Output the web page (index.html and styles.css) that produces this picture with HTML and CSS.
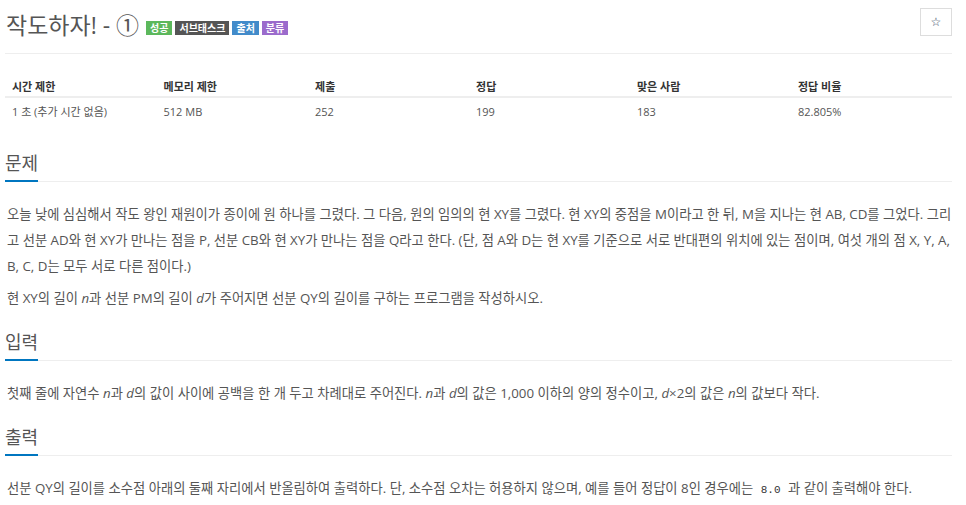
FILE: index.html
```html
<!DOCTYPE html>
<html lang="ko">
<head>
<meta charset="utf-8">
<link rel="stylesheet" href="styles.css">
</head>
<body>
<div class="container">
  <div class="page-header">
    <h1 class="title">작도하자! - ①
      <span class="label l-green">성공</span><span class="label l-dark">서브태스크</span><span class="label l-blue">출처</span><span class="label l-purple">분류</span>
    </h1>
    <button class="star-btn" type="button">☆</button>
  </div>
  <table class="info">
    <thead>
      <tr><th class="w16">시간 제한</th><th class="w16">메모리 제한</th><th class="w17">제출</th><th class="w17">정답</th><th class="w17">맞은 사람</th><th class="w17">정답 비율</th></tr>
    </thead>
    <tbody>
      <tr><td>1 초 (추가 시간 없음)</td><td>512 MB</td><td>252</td><td>199</td><td>183</td><td>82.805%</td></tr>
    </tbody>
  </table>

  <section class="sec first">
    <div class="headline"><h2><span>문제</span></h2></div>
    <div class="text">
      <p>오늘 낮에 심심해서 작도 왕인 재원이가 종이에 원 하나를 그렸다. 그 다음, 원의 임의의 현 XY를 그렸다. 현 XY의 중점을 M이라고 한 뒤, M을 지나는 현 AB, CD를 그었다. 그리고 선분 AD와 현 XY가 만나는 점을 P, 선분 CB와 현 XY가 만나는 점을 Q라고 한다. (단, 점 A와 D는 현 XY를 기준으로 서로 반대편의 위치에 있는 점이며, 여섯 개의 점 X, Y, A, B, C, D는 모두 서로 다른 점이다.)</p>
      <p>현 XY의 길이 <i>n</i>과 선분 PM의 길이 <i>d</i>가 주어지면 선분 QY의 길이를 구하는 프로그램을 작성하시오.</p>
    </div>
  </section>

  <section class="sec">
    <div class="headline"><h2><span>입력</span></h2></div>
    <div class="text">
      <p>첫째 줄에 자연수 <i>n</i>과 <i>d</i>의 값이 사이에 공백을 한 개 두고 차례대로 주어진다. <i>n</i>과 <i>d</i>의 값은 1,000 이하의 양의 정수이고, <i>d</i>×2의 값은 <i>n</i>의 값보다 작다.</p>
    </div>
  </section>

  <section class="sec">
    <div class="headline"><h2><span>출력</span></h2></div>
    <div class="text">
      <p>선분 QY의 길이를 소수점 아래의 둘째 자리에서 반올림하여 출력하다. 단, 소수점 오차는 허용하지 않으며, 예를 들어 정답이 8인 경우에는 <code>8.0</code> 과 같이 출력해야 한다.</p>
    </div>
  </section>
</div>
</body>
</html>
```

FILE: styles.css
```css
* { box-sizing: border-box; }
html, body { margin: 0; padding: 0; background: #fff; }
body {
  font-family: "Open Sans", "Noto Sans CJK KR", sans-serif;
  font-size: 13px;
  color: #555;
}
.container {
  width: 947px;
  margin-left: 5px;
}
.page-header {
  display: flex;
  justify-content: space-between;
  align-items: flex-start;
  border-bottom: 1px solid #eee;
  padding-top: 8px;
  height: 54px;
}
.title {
  margin: 0;
  margin-left: 1px;
  font-size: 23px;
  font-weight: 400;
  line-height: 34px;
  color: #555;
}
.label {
  display: inline-block;
  vertical-align: 2px;
  font-size: 10px;
  font-weight: 700;
  line-height: 14px;
  padding: 0 4px;
  color: #fff;
  margin-right: 3px;
}
.title .label:first-child { margin-left: 1px; }
.l-green { background: #5cb85c; }
.l-dark { background: #555; }
.l-blue { background: #428bca; }
.l-purple { background: #9b6bcc; }
.star-btn {
  width: 32px;
  height: 28px;
  border: 1px solid #ddd;
  background: #fff;
  color: #34495e;
  font-size: 12px;
  line-height: 26px;
  padding: 0;
  font-family: "DejaVu Sans", sans-serif;
}
.info {
  width: 100%;
  border-collapse: collapse;
  margin-top: 21px;
  font-size: 11px;
}
.info th, .info td {
  text-align: left;
  padding: 0 7px;
}
.info th {
  font-weight: 700;
  color: #333;
  height: 22px;
  border-bottom: 2px solid #eee;
  vertical-align: middle;
}
.info td {
  height: 27px;
  color: #555;
}
.w16 { width: 16%; }
.w17 { width: 17%; }
.sec { margin-top: 17px; }
.sec.first { margin-top: 25px; }
.headline {
  border-bottom: 1px solid #eee;
}
.headline h2 {
  margin: 0;
  font-size: 18px;
  font-weight: 400;
  line-height: 28px;
}
.headline h2 span {
  display: inline-block;
  padding: 0 0 3px;
  border-bottom: 2px solid #0076c0;
  margin-bottom: -1px;
  color: #555;
}
.text {
  padding-top: 19px;
  margin-right: -6px;
}
.text p {
  margin: 0;
  line-height: 26px;
  font-size: 13.3px;
  padding: 0 0 0 2px;
}
.text p + p { margin-top: 6px; }
.text i { font-style: italic; }
code {
  font-family: "Liberation Mono", monospace;
  font-size: 11px;
  color: #333;
  padding: 0 4px;
}
```
